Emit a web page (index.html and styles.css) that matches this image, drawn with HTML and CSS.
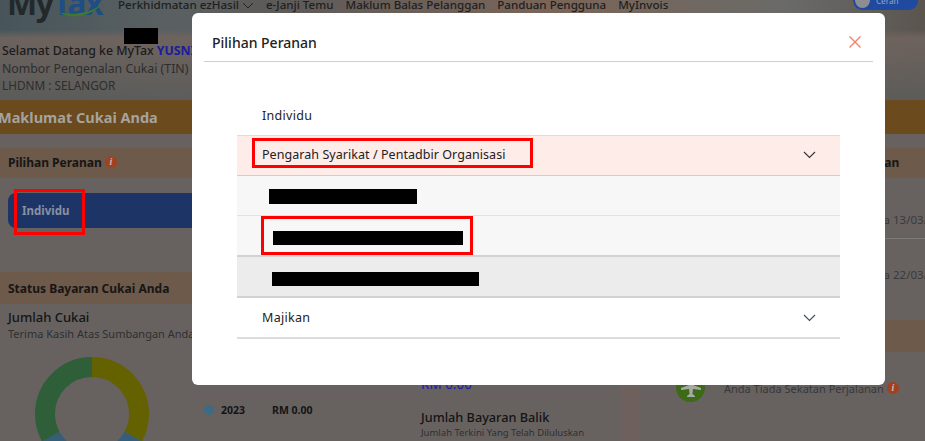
FILE: index.html
```html
<!DOCTYPE html>
<html lang="en">
<head>
    <meta charset="UTF-8">
    <meta name="viewport" content="width=device-width, initial-scale=1.0">
    <title>MyTax</title>
    <link rel="stylesheet" href="styles.css">
</head>
<body>
    <div class="page">
        <header class="top">
            <div class="nav">
                <div class="logo">
                    <span>My</span><span class="logo-tax">Tax</span>
                    <svg class="logo-swoosh" width="50" height="18" viewBox="0 0 50 18"><path d="M2 11 C10 18 34 18 48 0 C36 13 14 15 2 11 Z" fill="#3f7a2c"/></svg>
                </div>
                <a class="nav-link">Perkhidmatan ezHasil <svg width="12" height="7" viewBox="0 0 12 7"><path d="M1 1 L6 6 L11 1" fill="none" stroke="#222" stroke-width="1"/></svg></a>
                <a class="nav-link">e-Janji Temu</a>
                <a class="nav-link">Maklum Balas Pelanggan</a>
                <a class="nav-link">Panduan Pengguna</a>
                <a class="nav-link">MyInvois</a>
                <div class="toggle"><span class="toggle-knob"></span><span class="toggle-text">Cerah</span></div>
            </div>
            <div class="black top-mask"></div>
            <div class="welcome">
                <p class="welcome-name">Selamat Datang ke MyTax <b>YUSNI</b></p>
                <p>Nombor Pengenalan Cukai (TIN)</p>
                <p class="welcome-office">LHDNM : SELANGOR</p>
            </div>
        </header>

        <div class="band">Maklumat Cukai Anda</div>

        <div class="columns">
            <section class="col-left">
                <h3 class="sec-head">Pilihan Peranan <span class="info">i</span></h3>
                <div class="role-wrap">
                    <div class="role-btn">Individu<span class="red-box role-box"></span></div>
                </div>
                <h3 class="sec-head status-head">Status Bayaran Cukai Anda</h3>
                <div class="tax-sum">
                    <h4>Jumlah Cukai</h4>
                    <p>Terima Kasih Atas Sumbangan Anda</p>
                    <div class="chart-row">
                        <svg class="donut" width="114" height="114" viewBox="0 0 114 114">
                            <g fill="none" stroke-width="20" transform="rotate(-90 57 57)">
                                <circle cx="57" cy="57" r="47" pathLength="100" stroke="#646100" stroke-dasharray="33 67"/>
                                <circle cx="57" cy="57" r="47" pathLength="100" stroke="#355f78" stroke-dasharray="34 66" stroke-dashoffset="-33"/>
                                <circle cx="57" cy="57" r="47" pathLength="100" stroke="#2e5f38" stroke-dasharray="33 67" stroke-dashoffset="-67"/>
                            </g>
                        </svg>
                        <div class="legend"><span class="dot"></span><b>2023</b><b class="legend-amt">RM 0.00</b></div>
                    </div>
                </div>
            </section>

            <section class="col-mid">
                <div class="refund-amt">RM 0.00</div>
                <h4>Jumlah Bayaran Balik</h4>
                <p>Jumlah Terkini Yang Telah Diluluskan</p>
            </section>

            <section class="col-right">
                <h3 class="sec-head right-head">Bayaran</h3>
                <div class="date-row">pada 13/03/2024</div>
                <div class="date-row">pada 22/03/2024</div>
                <div class="right-band"></div>
                <div class="travel">
                    <span class="plane">
                        <svg width="20" height="20" viewBox="0 0 20 20"><path d="M9 1 h2 l1 6 l8 3 v2 l-8 -1 l-.6 5 l2.6 2 v1 h-8 v-1 l2.6 -2 l-.6 -5 l-8 1 v-2 l8 -3 Z" fill="#a9a9a4"/></svg>
                    </span>
                    <span class="travel-text">Anda Tiada Sekatan Perjalanan</span>
                    <span class="info">i</span>
                </div>
            </section>
        </div>
    </div>

    <div class="overlay">
        <div class="modal">
            <div class="modal-head">
                <h2>Pilihan Peranan</h2>
                <svg width="14" height="14" viewBox="0 0 14 14"><path d="M1.5 1.5 L12.5 12.5 M12.5 1.5 L1.5 12.5" stroke="#f97f66" stroke-width="1.4" fill="none"/></svg>
            </div>
            <div class="role-list">
                <div class="row row-plain">Individu</div>
                <div class="row row-open">
                    <span class="red-box open-box">Pengarah Syarikat / Pentadbir Organisasi</span>
                    <svg class="chev" width="13" height="8" viewBox="0 0 13 8"><path d="M1 1 L6.5 6.5 L12 1" fill="none" stroke="#333" stroke-width="1.1"/></svg>
                </div>
                <div class="row child child-one"><span class="black mask-one"></span></div>
                <div class="row child child-two"><span class="red-box two-box"><span class="black mask-two"></span></span></div>
                <div class="row child child-three"><span class="black mask-three"></span></div>
                <div class="row row-last">
                    <span>Majikan</span>
                    <svg class="chev" width="13" height="8" viewBox="0 0 13 8"><path d="M1 1 L6.5 6.5 L12 1" fill="none" stroke="#3a4a5a" stroke-width="1.1"/></svg>
                </div>
            </div>
        </div>
    </div>
</body>
</html>
```

FILE: styles.css
```css
/* General */
* {
    margin: 0;
    padding: 0;
    box-sizing: border-box;
}

body {
    font-family: "Noto Sans", "Open Sans", sans-serif;
    background-color: #676260;
    color: #1d1d1d;
    overflow: hidden;
}

.page {
    height: 441px;
    overflow: hidden;
}

.black {
    display: block;
    background: #000;
}

.red-box {
    border: 3px solid #f00;
}

.info {
    display: inline-block;
    width: 12px;
    height: 12px;
    border-radius: 50%;
    background: #a0421f;
    color: #c9b9b0;
    font: italic bold 10px/12px "Liberation Serif", serif;
    text-align: center;
    vertical-align: 2px;
}

/* Header */
.top {
    position: relative;
    height: 100px;
    background:
        linear-gradient(180deg, rgba(0, 0, 0, 0) 30%, rgba(112, 100, 94, 0.9) 38%, rgba(92, 92, 90, 0.9) 100%),
        linear-gradient(90deg, #47555a 0%, #5a6062 18%, #5d5a58 30%, #7a6558 60%, #6a6a68 85%, #5b5550 100%);
}

.nav {
    display: flex;
    align-items: flex-start;
    height: 28px;
    padding-left: 7px;
    overflow: hidden;
    font-size: 11.6px;
    font-weight: 500;
    color: #1f1f1f;
}

.logo {
    position: relative;
    width: 111px;
    margin-top: -14px;
    font-size: 32px;
    line-height: 34px;
    font-weight: 700;
    color: #23282b;
    letter-spacing: -1.4px;
}

.logo-tax {
    color: #1f4d86;
}

.logo-swoosh {
    position: absolute;
    left: 50px;
    top: 15px;
}

.nav-link {
    margin-right: 12px;
    margin-top: -3px;
    line-height: 16px;
    white-space: nowrap;
}

.toggle {
    display: flex;
    align-items: center;
    width: 65px;
    height: 19px;
    margin-left: auto;
    margin-right: 7px;
    margin-top: -9px;
    padding-left: 2px;
    border-radius: 10px;
    background: #1f4aa0;
    font-size: 8px;
    color: #8b9bc0;
}

.toggle-knob {
    width: 15px;
    height: 15px;
    margin-right: 6px;
    border-radius: 50%;
    background: #8e8e92;
}

.top-mask {
    position: absolute;
    left: 124px;
    top: 28px;
    width: 34px;
    height: 16px;
}

.welcome {
    padding: 14px 0 0 2px;
    font-size: 12.3px;
    line-height: 17.5px;
    color: #2d2d2d;
}

.welcome-name {
    font-weight: 500;
    color: #1b1b1b;
}

.welcome-name b {
    color: #1a1c9c;
}

.welcome-office {
    font-size: 11.8px;
}

.band {
    height: 34px;
    background: #6b4a1e;
    color: #a5a39d;
    font-size: 14.5px;
    font-weight: 700;
    line-height: 34px;
    text-indent: -2px;
}

/* Page columns behind the dialog */
.columns {
    display: grid;
    grid-template-columns: 421px 219px 285px;
    margin-top: 14px;
}

.sec-head {
    height: 30px;
    padding-left: 8px;
    background: #6d5a4a;
    color: #161616;
    font-size: 12px;
    font-weight: 700;
    line-height: 29px;
}

.role-wrap {
    height: 94px;
    padding: 15px 0 0 8px;
}

.role-btn {
    position: relative;
    height: 35px;
    padding-left: 14px;
    border-radius: 8px 0 0 8px;
    background: #1c3566;
    color: #8890a4;
    font-size: 11.5px;
    font-weight: 700;
    line-height: 35px;
}

.role-box {
    position: absolute;
    left: 6px;
    top: -4px;
    width: 71px;
    height: 46px;
}

.status-head {
    height: 32px;
    line-height: 33px;
}

.tax-sum {
    padding: 4px 0 0 8px;
}

.tax-sum h4 {
    font-size: 13px;
    font-weight: 500;
    line-height: 18px;
    color: #141414;
}

.tax-sum p {
    font-size: 11px;
    line-height: 15px;
    white-space: nowrap;
    color: #2f2f2f;
}

.chart-row {
    display: flex;
    margin-top: 16px;
    padding-left: 27px;
}

.donut {
    flex: none;
}

.legend {
    display: flex;
    align-items: center;
    height: 12px;
    margin: 47px 0 0 55px;
    font-size: 10.5px;
    color: #141414;
}

.dot {
    width: 10px;
    height: 10px;
    margin-right: 7px;
    border-radius: 50%;
    background: #3d6b85;
}

.legend-amt {
    margin-left: 27px;
}

.col-mid {
    padding-top: 229px;
    border-right: 18px solid #6e605c;
}

.refund-amt {
    font-size: 13.5px;
    line-height: 15px;
    color: #1c1ca8;
}

.col-mid h4 {
    margin-top: 16px;
    font-size: 12.7px;
    font-weight: 500;
    line-height: 18px;
    color: #141414;
}

.col-mid p {
    font-size: 9.5px;
    line-height: 14px;
    color: #2f2f2f;
}

.right-head {
    padding-left: 210px;
}

.date-row {
    height: 61px;
    padding-left: 223px;
    border-bottom: 1px solid #7a7a78;
    color: #3a3a3a;
    font-size: 11.5px;
    line-height: 84px;
    white-space: nowrap;
    overflow: hidden;
}

.date-row + .date-row {
    height: 71px;
    border-bottom: none;
    line-height: 72px;
}

.right-band {
    height: 32px;
    margin-top: 10px;
    background: #6d5a4a;
}

.travel {
    display: flex;
    align-items: center;
    padding: 21px 0 0 36px;
}

.plane {
    display: flex;
    align-items: center;
    justify-content: center;
    width: 29px;
    height: 29px;
    margin-right: 19px;
    border-radius: 50%;
    background: #3c6a17;
}

.travel-text {
    margin: 2px 3px 0 0;
    font-size: 11px;
    white-space: nowrap;
    color: #37393a;
}

/* Dialog */
.overlay {
    position: fixed;
    left: 0;
    top: 0;
    width: 925px;
    height: 441px;
    padding: 13px 0 0 192px;
}

.modal {
    width: 693px;
    height: 372px;
    padding: 0 12px;
    border-radius: 6px;
    background: #fff;
}

.modal-head {
    display: flex;
    align-items: center;
    justify-content: space-between;
    height: 49px;
    padding: 0 11px 0 8px;
    border-bottom: 1px solid #cfcfcf;
}

.modal-head h2 {
    margin-top: 11px;
    font-size: 14px;
    font-weight: 500;
    color: #222;
}

.modal-head svg {
    margin-top: 9px;
}

.role-list {
    margin: 34px 33px 0;
    font-size: 12.5px;
    letter-spacing: 0.3px;
    color: #222;
}

.row {
    display: flex;
    align-items: center;
    justify-content: space-between;
    border-bottom: 2px solid #d2d2d2;
}

.row-plain {
    height: 40px;
    padding-left: 25px;
    border-bottom: 1px solid #dcdcdc;
}

.row-open {
    height: 40px;
    padding-right: 24px;
    align-items: flex-start;
    background: #feece9;
    border-bottom: 1px solid #cfcfcf;
}

.open-box {
    width: 281px;
    height: 30px;
    margin: 2px 0 0 15px;
    padding: 5px 0 0 7px;
    letter-spacing: 0.05px;
    line-height: 18px;
    white-space: nowrap;
}

.row-open .chev {
    margin-top: 15px;
}

.child {
    justify-content: flex-start;
    background: #f7f7f7;
}

.child-one {
    height: 40px;
    padding: 2px 0 0 32px;
    border-bottom: 1px solid #e2e2e2;
}

.mask-one {
    width: 148px;
    height: 15px;
}

.child-two {
    height: 41px;
    padding-left: 24px;
    align-items: flex-start;
}

.two-box {
    display: block;
    width: 212px;
    height: 39px;
    padding: 12px 0 0 9px;
}

.mask-two {
    width: 190px;
    height: 14px;
}

.child-three {
    height: 41px;
    padding: 15px 0 0 35px;
    align-items: flex-start;
    background: #ececec;
}

.mask-three {
    width: 207px;
    height: 14px;
}

.row-last {
    height: 41px;
    padding: 0 24px 0 25px;
    background: #fff;
    border-bottom-color: #dcdcdc;
}
```
